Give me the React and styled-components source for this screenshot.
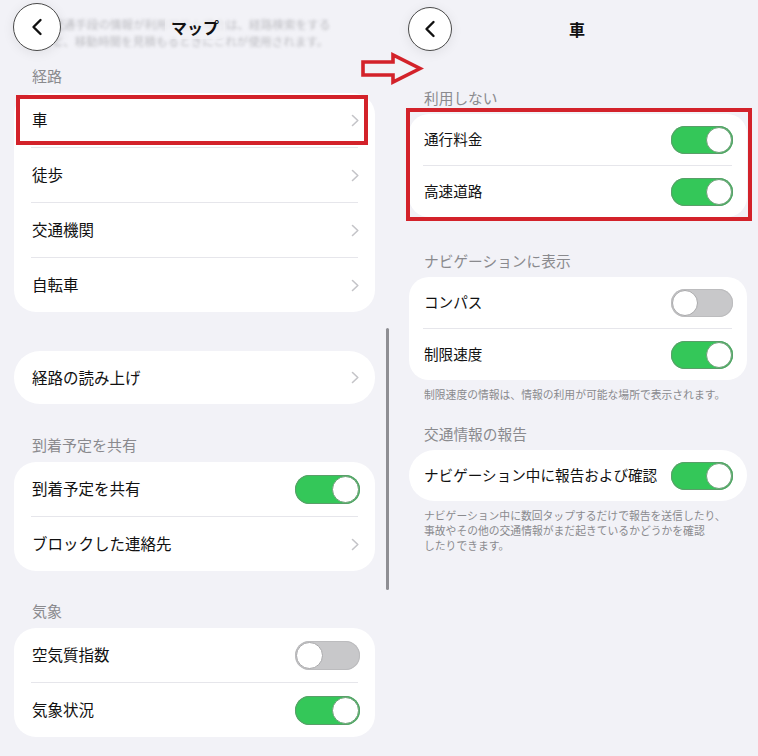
import styled, { createGlobalStyle } from "styled-components";

const GlobalStyle = createGlobalStyle`
  html, body {
    margin: 0;
    padding: 0;
    background: #f2f2f7;
  }
  body {
    font-family: "Noto Sans CJK JP", "Noto Sans", sans-serif;
    color: #111;
  }
`

const Page = styled.div`
  position: relative;
  display: grid;
  grid-template-columns: 390px 368px;
  width: 758px;
  height: 756px;
  overflow: hidden;
  background: #f2f2f7;
`
const Panel = styled.div`
  position: relative;
  display: flex;
  flex-direction: column;
  padding: ${p => p.$pad};
`
const Header = styled.div`
  position: relative;
  z-index: 1;
  display: grid;
  grid-template-columns: 1fr auto 1fr;
  align-items: center;
  height: ${p => p.$h}px;
  margin: ${p => p.$margin};
  padding: 0 ${p => p.$side}px;
`
const BackButton = styled.div`
  justify-self: start;
  width: ${p => p.$size}px;
  height: ${p => p.$size}px;
  box-sizing: border-box;
  border-radius: 50%;
  background: #fff;
  border: 1px solid #4a4a4a;
  box-shadow: 0 2px 12px rgba(0, 0, 0, 0.08);
  display: flex;
  align-items: center;
  justify-content: center;
`
const Title = styled.div`
  font-size: 16px;
  font-weight: 700;
  color: #111;
  padding: 0 6px;
  border-radius: 6px;
  background: rgba(242, 242, 247, 0.7);
  transform: translateX(${p => p.$shift || 0}px);
`
const BlurNote = styled.div`
  position: absolute;
  top: 16px;
  left: 52px;
  font-size: 11.6px;
  line-height: 17px;
  color: #bdbdc2;
  filter: blur(1.4px);
  white-space: nowrap;
`
const Section = styled.div`
  margin-top: ${p => p.$mt}px;
`
const SectionTitle = styled.div`
  font-size: ${p => p.$fs}px;
  line-height: ${p => p.$lh}px;
  color: #8a8a8e;
  padding: 0 ${p => p.$pl}px 6px;
`
const Card = styled.div`
  position: relative;
  background: #fff;
  border-radius: ${p => p.$r}px;
`
const Row = styled.div`
  position: relative;
  display: flex;
  align-items: center;
  justify-content: space-between;
  height: ${p => p.$h}px;
  padding: 0 ${p => p.$pr}px 0 ${p => p.$pl}px;
  font-size: ${p => p.$fs}px;
  color: #111;
`
const Label = styled.span`
  position: relative;
  top: -1px;
`
const Divider = styled.div`
  height: 1px;
  background: #e6e6eb;
  margin: 0 ${p => p.$r}px 0 ${p => p.$l}px;
`
const Note = styled.div`
  font-size: 10.8px;
  line-height: 15px;
  color: #8a8a8e;
  padding: 7px 15px 0;
  white-space: nowrap;
`
const Track = styled.span`
  position: relative;
  display: flex;
  flex-shrink: 0;
  width: ${p => p.$w}px;
  height: ${p => p.$h}px;
  box-sizing: border-box;
  border-radius: ${p => p.$h}px;
  padding: 1px;
  background: ${p => (p.$on ? "#34c759" : "#c8c8ca")};
  justify-content: ${p => (p.$on ? "flex-end" : "flex-start")};
  box-shadow: inset 0 0 0 1px ${p => (p.$on ? "#5a9e69" : "#bcbcbe")};
`
const Knob = styled.span`
  width: ${p => p.$d}px;
  height: ${p => p.$d}px;
  box-sizing: border-box;
  border-radius: 50%;
  background: #fff;
  border: 1px solid ${p => (p.$on ? "#6f9e78" : "#a9a9ab")};
`
const Highlight = styled.div`
  position: absolute;
  inset: ${p => p.$inset};
  border: 4px solid #d3222a;
  pointer-events: none;
`
const Arrow = styled.svg`
  position: absolute;
  left: 360px;
  top: 52px;
`
const ScrollBar = styled.div`
  position: absolute;
  right: 1px;
  top: 328px;
  width: 3px;
  height: 262px;
  border-radius: 2px;
  background: #8e8e93;
`

const Chevron = () => (
  <svg width="10" height="13" viewBox="0 0 10 13">
    <path d="M2.5 1.5 L7.8 6.5 L2.5 11.5" fill="none" stroke="#c4c4c8" strokeWidth="1.6" strokeLinecap="round" strokeLinejoin="round" />
  </svg>
)

const BackIcon = () => (
  <svg width="14" height="18" viewBox="0 0 14 18">
    <path d="M10.5 2 L3.5 9 L10.5 16" fill="none" stroke="#111" strokeWidth="2.4" strokeLinecap="round" strokeLinejoin="round" />
  </svg>
)

const Toggle = ({ on, w, h }) => (
  <Track $on={on} $w={w} $h={h}>
    <Knob $on={on} $d={h - 2} />
  </Track>
)

const L = { h: 54, pl: 18, pr: 15, fs: 15.5 }
const R = { h: 51, pl: 15, pr: 14, fs: 14.6 }

const LeftRow = ({ label, toggle, on, children }) => (
  <Row $h={L.h} $pl={L.pl} $pr={L.pr} $fs={L.fs}>
    <Label>{label}</Label>
    {toggle ? <Toggle on={on} w={65} h={29} /> : <Chevron />}
    {children}
  </Row>
)

const RightRow = ({ label, on }) => (
  <Row $h={R.h} $pl={R.pl} $pr={R.pr} $fs={R.fs}>
    <Label>{label}</Label>
    <Toggle on={on} w={62} h={28} />
  </Row>
)

const LDiv = () => <Divider $l={17} $r={17} />
const RDiv = () => <Divider $l={14} $r={15} />

export default function App() {
  return (
    <Page>
      <GlobalStyle />
      <Panel $pad="0 15px 0 14px">
        <BlurNote>
          交通手段の情報が利用可能な場合は、経路検索をする
          <br />
          と、移動時間を見積もるときにこれが使用されます。
        </BlurNote>
        <Header $h={53} $margin="0 -15px 0 -14px" $side={13}>
          <BackButton $size={48}>
            <BackIcon />
          </BackButton>
          <Title>マップ</Title>
          <span />
        </Header>

        <Section $mt={12}>
          <SectionTitle $fs={15} $lh={22} $pl={18}>経路</SectionTitle>
          <Card $r={22}>
            <LeftRow label="車">
              <Highlight $inset="2px 7px 2px 2px" />
            </LeftRow>
            <LDiv />
            <LeftRow label="徒歩" />
            <LDiv />
            <LeftRow label="交通機関" />
            <LDiv />
            <LeftRow label="自転車" />
          </Card>
        </Section>

        <Section $mt={39}>
          <Card $r={26}>
            <Row $h={53} $pl={L.pl} $pr={L.pr} $fs={L.fs}>
              <Label>経路の読み上げ</Label>
              <Chevron />
            </Row>
          </Card>
        </Section>

        <Section $mt={30}>
          <SectionTitle $fs={15} $lh={22} $pl={18}>到着予定を共有</SectionTitle>
          <Card $r={22}>
            <LeftRow label="到着予定を共有" toggle on />
            <LDiv />
            <LeftRow label="ブロックした連絡先" />
          </Card>
        </Section>

        <Section $mt={29}>
          <SectionTitle $fs={15} $lh={22} $pl={18}>気象</SectionTitle>
          <Card $r={22}>
            <LeftRow label="空気質指数" toggle on={false} />
            <LDiv />
            <LeftRow label="気象状況" toggle on />
          </Card>
        </Section>

        <ScrollBar />
      </Panel>

      <Panel $pad="0 11px 0 19px">
        <Header $h={58} $margin="0 -11px 0 -19px" $side={18}>
          <BackButton $size={44}>
            <BackIcon />
          </BackButton>
          <Title $shift={3}>車</Title>
          <span />
        </Header>

        <Section $mt={30}>
          <SectionTitle $fs={14.7} $lh={20} $pl={15}>利用しない</SectionTitle>
          <Card $r={20}>
            <RightRow label="通行料金" on />
            <RDiv />
            <RightRow label="高速道路" on />
            <Highlight $inset="-6px -5px -4px -3px" />
          </Card>
        </Section>

        <Section $mt={34}>
          <SectionTitle $fs={14.7} $lh={20} $pl={15}>ナビゲーションに表示</SectionTitle>
          <Card $r={20}>
            <RightRow label="コンパス" on={false} />
            <RDiv />
            <RightRow label="制限速度" on />
          </Card>
          <Note>制限速度の情報は、情報の利用が可能な場所で表示されます。</Note>
        </Section>

        <Section $mt={22}>
          <SectionTitle $fs={14.7} $lh={20} $pl={15}>交通情報の報告</SectionTitle>
          <Card $r={26}>
            <RightRow label="ナビゲーション中に報告および確認" on />
          </Card>
          <Note>
            ナビゲーション中に数回タップするだけで報告を送信したり、
            <br />
            事故やその他の交通情報がまだ起きているかどうかを確認
            <br />
            したりできます。
          </Note>
        </Section>
      </Panel>

      <Arrow width="64" height="33" viewBox="0 0 64 33">
        <path d="M3 10 H33 V3 L60 16.5 L33 30 V23 H3 Z" fill="none" stroke="#d3222a" strokeWidth="3.6" strokeLinejoin="miter" />
      </Arrow>
    </Page>
  );
}
